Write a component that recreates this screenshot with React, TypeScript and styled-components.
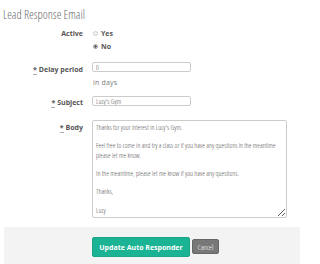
import React from "react";
import styled, { createGlobalStyle } from "styled-components";

const Global = createGlobalStyle`
  html, body { margin: 0; padding: 0; background: #fff; }
  body { font-family: "Open Sans", "Liberation Sans", sans-serif; color: #555; }
  * { box-sizing: border-box; }
`;

const condensed = `"Open Sans Condensed Light", "Open Sans", sans-serif`;

const Page = styled.div`
  width: 300px;
  height: 264px;
  overflow: hidden;
  display: flex;
  flex-direction: column;
`;

const Title = styled.h3`
  margin: 8px 0 0 3px;
  font-family: ${condensed};
  font-weight: 300;
  font-size: 12px;
  line-height: 14px;
  color: #676a6c;
`;

const Row = styled.div<{ $mt: number }>`
  display: grid;
  grid-template-columns: 83px 1fr;
  column-gap: 9px;
  align-items: start;
  margin-top: ${(p) => p.$mt}px;
`;

const Label = styled.label<{ $pt: number }>`
  justify-self: end;
  padding-top: ${(p) => p.$pt}px;
  font-size: 7px;
  line-height: 10px;
  font-weight: 700;
  color: #555;
  white-space: nowrap;
`;

const Req = styled.abbr`
  text-decoration: none;
  border-bottom: 1px solid #aaa;
  margin-right: 2px;
`;

const Field = styled.div`
  display: flex;
  flex-direction: column;
  align-items: flex-start;
`;

const RadioLine = styled.div`
  display: flex;
  align-items: center;
  gap: 3px;
  height: 13px;
  font-size: 7px;
  font-weight: 700;
  color: #555;
  padding-left: 1px;
`;

const Radio = styled.span<{ $checked?: boolean }>`
  width: 5px;
  height: 5px;
  border-radius: 50%;
  border: 1px solid ${(p) => (p.$checked ? "#999" : "#ccc")};
  background: ${(p) => (p.$checked ? "radial-gradient(circle, #666 0 1.2px, #eee 1.4px)" : "#f4f4f4")};
`;

const TextInput = styled.input`
  width: 99px;
  height: 10px;
  padding: 0 3px;
  border: 1px solid #ccc;
  border-radius: 2px;
  font-family: ${condensed};
  font-weight: 300;
  font-size: 7px;
  color: #555;
  outline: none;
  background: #fff;
`;

const Help = styled.div`
  margin-top: 5px;
  font-size: 7px;
  line-height: 12px;
  color: #7a7a7a;
  letter-spacing: 0.2px;
  padding-left: 1px;
`;

const Body = styled.textarea`
  width: 195px;
  height: 98px;
  padding: 2px 3px;
  border: 1px solid #ccc;
  border-radius: 2px;
  font-family: ${condensed};
  font-weight: 300;
  font-size: 7px;
  line-height: 9.2px;
  color: #555;
  outline: none;
  resize: vertical;
  overflow: hidden;
`;

const Footer = styled.div`
  margin: 9px 0 0 4px;
  flex: 1;
  background: #f3f3f3;
  display: flex;
  align-items: flex-start;
  gap: 2px;
  padding: 10px 0 0 88px;
`;

const Button = styled.button<{ $variant: "primary" | "muted" }>`
  border-radius: 2px;
  cursor: pointer;
  padding: 0;
  ${(p) =>
    p.$variant === "primary"
      ? `
    height: 20px;
    width: 98px;
    background: #1ab394;
    border: 1px solid #18a689;
    color: #fff;
    font-family: "Open Sans", sans-serif;
    font-weight: 700;
    font-size: 7px;
  `
      : `
    height: 15px;
    width: 27px;
    margin-top: 2px;
    background: #787878;
    border: 1px solid #666;
    color: #fff;
    font-family: ${condensed};
    font-weight: 300;
    font-size: 7.5px;
  `}
`;

const bodyText =
  "Thanks for your interest in Lucy's Gym.\n\nFeel free to come in and try a class or if you have any questions in the meantime please let me know.\n\nIn the meantime, please let me know if you have any questions.\n\nThanks,\n\nLucy";

export default function App() {
  return (
    <Page>
      <Global />
      <Title>Lead Response Email</Title>
      <Row $mt={5}>
        <Label $pt={1.5}>Active</Label>
        <Field>
          <RadioLine>
            <Radio />
            Yes
          </RadioLine>
          <RadioLine>
            <Radio $checked />
            No
          </RadioLine>
        </Field>
      </Row>
      <Row $mt={9}>
        <Label $pt={3}>
          <Req title="required">*</Req>Delay period
        </Label>
        <Field>
          <TextInput defaultValue="0" />
          <Help>in days</Help>
        </Field>
      </Row>
      <Row $mt={7}>
        <Label $pt={2}>
          <Req title="required">*</Req>Subject
        </Label>
        <Field>
          <TextInput defaultValue="Lucy's Gym" />
        </Field>
      </Row>
      <Row $mt={12}>
        <Label $pt={3}>
          <Req title="required">*</Req>Body
        </Label>
        <Field>
          <Body defaultValue={bodyText} />
        </Field>
      </Row>
      <Footer>
        <Button $variant="primary">Update Auto Responder</Button>
        <Button $variant="muted">Cancel</Button>
      </Footer>
    </Page>
  );
}
